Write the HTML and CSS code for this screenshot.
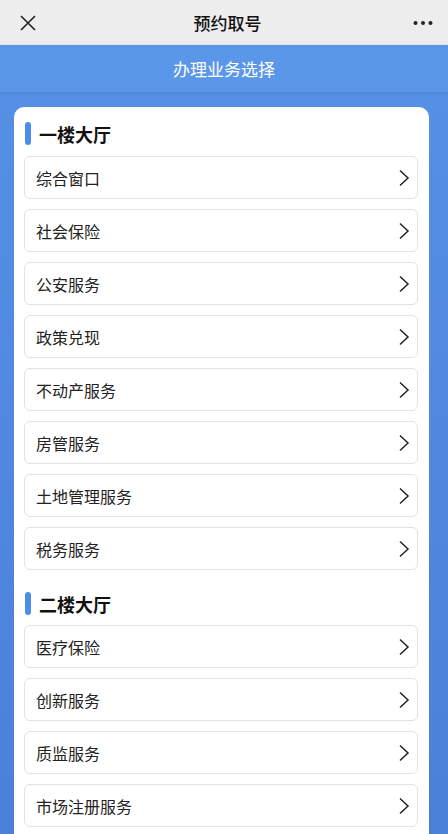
FILE: index.html
```html
<!DOCTYPE html>
<html lang="zh-CN">
<head>
<meta charset="utf-8">
<title>预约取号</title>
<link rel="stylesheet" href="styles.css">
</head>
<body>
<div class="navbar">
  <svg class="close" width="16" height="16" viewBox="0 0 16 16"><path d="M1 1 L15 15 M15 1 L1 15" stroke="#222" stroke-width="1.6" fill="none"/></svg>
  <div class="nav-title">预约取号</div>
  <svg class="more" width="20" height="6" viewBox="0 0 20 6"><circle cx="2.5" cy="3" r="2" fill="#222"/><circle cx="10" cy="3" r="2" fill="#222"/><circle cx="17.5" cy="3" r="2" fill="#222"/></svg>
</div>
<div class="header">办理业务选择</div>
<div class="main">
  <div class="card">
    <div class="section-title"><span class="bar"></span><span>一楼大厅</span></div>
    <div class="list">
      <div class="item"><span>综合窗口</span><svg class="chev" width="12" height="18" viewBox="0 0 12 18"><path d="M2 1.5 L10 9 L2 16.5" stroke="#222" stroke-width="1.5" fill="none"/></svg></div>
      <div class="item"><span>社会保险</span><svg class="chev" width="12" height="18" viewBox="0 0 12 18"><path d="M2 1.5 L10 9 L2 16.5" stroke="#222" stroke-width="1.5" fill="none"/></svg></div>
      <div class="item"><span>公安服务</span><svg class="chev" width="12" height="18" viewBox="0 0 12 18"><path d="M2 1.5 L10 9 L2 16.5" stroke="#222" stroke-width="1.5" fill="none"/></svg></div>
      <div class="item"><span>政策兑现</span><svg class="chev" width="12" height="18" viewBox="0 0 12 18"><path d="M2 1.5 L10 9 L2 16.5" stroke="#222" stroke-width="1.5" fill="none"/></svg></div>
      <div class="item"><span>不动产服务</span><svg class="chev" width="12" height="18" viewBox="0 0 12 18"><path d="M2 1.5 L10 9 L2 16.5" stroke="#222" stroke-width="1.5" fill="none"/></svg></div>
      <div class="item"><span>房管服务</span><svg class="chev" width="12" height="18" viewBox="0 0 12 18"><path d="M2 1.5 L10 9 L2 16.5" stroke="#222" stroke-width="1.5" fill="none"/></svg></div>
      <div class="item"><span>土地管理服务</span><svg class="chev" width="12" height="18" viewBox="0 0 12 18"><path d="M2 1.5 L10 9 L2 16.5" stroke="#222" stroke-width="1.5" fill="none"/></svg></div>
      <div class="item"><span>税务服务</span><svg class="chev" width="12" height="18" viewBox="0 0 12 18"><path d="M2 1.5 L10 9 L2 16.5" stroke="#222" stroke-width="1.5" fill="none"/></svg></div>
    </div>
    <div class="section-title second"><span class="bar"></span><span>二楼大厅</span></div>
    <div class="list">
      <div class="item"><span>医疗保险</span><svg class="chev" width="12" height="18" viewBox="0 0 12 18"><path d="M2 1.5 L10 9 L2 16.5" stroke="#222" stroke-width="1.5" fill="none"/></svg></div>
      <div class="item"><span>创新服务</span><svg class="chev" width="12" height="18" viewBox="0 0 12 18"><path d="M2 1.5 L10 9 L2 16.5" stroke="#222" stroke-width="1.5" fill="none"/></svg></div>
      <div class="item"><span>质监服务</span><svg class="chev" width="12" height="18" viewBox="0 0 12 18"><path d="M2 1.5 L10 9 L2 16.5" stroke="#222" stroke-width="1.5" fill="none"/></svg></div>
      <div class="item"><span>市场注册服务</span><svg class="chev" width="12" height="18" viewBox="0 0 12 18"><path d="M2 1.5 L10 9 L2 16.5" stroke="#222" stroke-width="1.5" fill="none"/></svg></div>
    </div>
  </div>
</div>
</body>
</html>
```
FILE: styles.css
```css
html, body {
  margin: 0;
  padding: 0;
}
body {
  width: 448px;
  height: 834px;
  overflow: hidden;
  font-family: "Noto Sans CJK SC", "Noto Sans", sans-serif;
  color: #222;
  background: #4c82da;
}
.navbar {
  height: 45px;
  background: #ededed;
  display: flex;
  align-items: center;
  justify-content: space-between;
  padding: 0 15px 0 20px;
}
.nav-title {
  font-size: 17px;
  font-weight: 500;
  color: #111;
  margin-left: 6px;
}
.close { display: block; margin-top: 1px; }
.more { display: block; margin-top: 1px; }
.header {
  height: 47px;
  background: #5b97e8;
  color: #fff;
  font-size: 17px;
  display: flex;
  align-items: center;
  justify-content: center;
  box-shadow: 0 1px 3px rgba(40, 80, 160, 0.25);
  position: relative;
}
.main {
  height: 742px;
  background: linear-gradient(180deg, #5590e4 0%, #4b80d9 100%);
  padding-top: 15px;
  box-sizing: border-box;
}
.card {
  margin-left: 14px;
  width: 415px;
  background: #fff;
  border-radius: 10px;
  padding: 15px 11px 20px 10px;
  box-sizing: border-box;
}
.section-title {
  display: flex;
  align-items: center;
  height: 23px;
  font-size: 18px;
  font-weight: 700;
  color: #111;
  margin-bottom: 11px;
}
.section-title.second {
  margin-top: 22px;
  margin-bottom: 10px;
}
.bar {
  width: 6px;
  height: 23px;
  border-radius: 3px;
  background: #4d8de9;
  margin-left: 1px;
  margin-right: 8px;
}
.list {
  display: flex;
  flex-direction: column;
  gap: 10px;
}
.item {
  height: 43px;
  box-sizing: border-box;
  border: 1px solid #e2e2e2;
  border-radius: 6px;
  display: flex;
  align-items: center;
  justify-content: space-between;
  padding: 0 7px 0 11px;
  font-size: 16px;
  color: #222;
}
.chev { display: block; }
```
